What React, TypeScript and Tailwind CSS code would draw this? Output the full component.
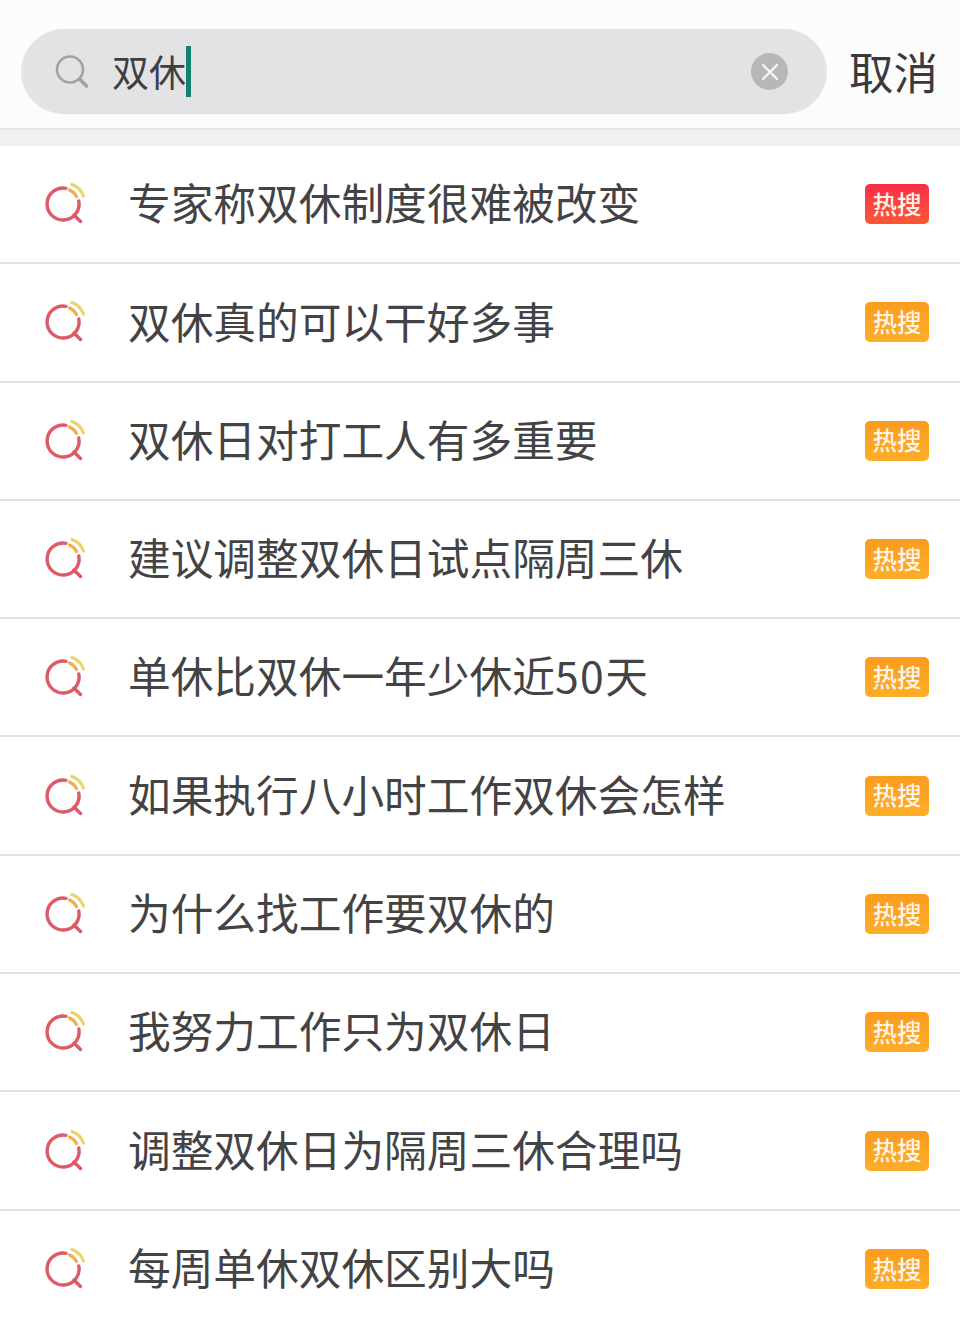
import React from "react";

const rows = [
  "专家称双休制度很难被改变",
  "双休真的可以干好多事",
  "双休日对打工人有多重要",
  "建议调整双休日试点隔周三休",
  <>
    单休比双休一年少休近<span className="tracking-[1.5px]">50</span>天
  </>,
  "如果执行八小时工作双休会怎样",
  "为什么找工作要双休的",
  "我努力工作只为双休日",
  "调整双休日为隔周三休合理吗",
  "每周单休双休区别大吗",
];

const HotIcon = () => (
  <svg width="44" height="44" viewBox="0 0 44 44" fill="none" className="shrink-0">
    <path d="M24 6.3A16 16 0 1 0 36.8 19" stroke="#dd5a66" strokeWidth="3.4" strokeLinecap="round" />
    <path d="M32 33L38.5 39.5" stroke="#dd5a66" strokeWidth="3.4" strokeLinecap="round" />
    <path d="M30 2.5C35.5 4.5 39.5 8.5 41.5 14" stroke="#ecd36c" strokeWidth="3.2" strokeLinecap="round" />
    <path d="M27.5 8C30.5 9.3 33 11.5 34.5 14.5" stroke="#eeb04f" strokeWidth="3.2" strokeLinecap="round" />
  </svg>
);

const Row = ({ text, first }: { text: React.ReactNode; first: boolean }) => (
  <div className="h-[118.3px] flex items-center pl-[42px] pr-[31px] border-b-2 border-[#e1e1e3] bg-white">
    <HotIcon />
    <div className="ml-[42px] mb-[5px] flex-1 text-[42.7px] leading-none text-[#434345] whitespace-nowrap">{text}</div>
    <div
      className={
        first
          ? "w-16 h-10 rounded-[5px] flex items-center justify-center text-[24.5px] font-medium leading-none text-[#fdf3e6] bg-gradient-to-b from-[#f72c47] to-[#fb5733]"
          : "w-16 h-10 rounded-[5px] flex items-center justify-center text-[24.5px] font-medium leading-none text-[#fdf3e6] bg-gradient-to-b from-[#fb9b1f] to-[#fdae28]"
      }
    >
      热搜
    </div>
  </div>
);

export default function App() {
  return (
    <div className="w-[960px] h-[1320px] overflow-hidden bg-white font-['Noto_Sans_CJK_SC','Liberation_Sans',sans-serif]">
      <div className="h-[130px] bg-[#fcfcfc] border-b-2 border-[#e6e6e8] flex items-start pt-[29px] pl-[21px]">
        <div className="w-[806px] h-[85px] rounded-full bg-[#e3e3e5] flex items-center pl-[33px] pr-[39px]">
          <svg width="36" height="36" viewBox="0 0 36 36" fill="none" className="shrink-0">
            <circle cx="16" cy="15.5" r="13" stroke="#a2a2a4" strokeWidth="2.6" />
            <path d="M26 25.5L32.5 32" stroke="#a2a2a4" strokeWidth="3.8" strokeLinecap="round" />
          </svg>
          <span className="ml-[22px] text-[37px] leading-none text-[#3f3f41]">双休</span>
          <span className="w-[5px] h-[51px] bg-[#11806f]" />
          <span className="ml-auto w-[37px] h-[37px] rounded-full bg-[#b7b7b9] flex items-center justify-center">
            <svg width="20" height="20" viewBox="0 0 20 20" fill="none">
              <path d="M3 3L17 17M17 3L3 17" stroke="#f6f6f6" strokeWidth="2.4" strokeLinecap="round" />
            </svg>
          </span>
        </div>
        <span className="ml-[22px] mt-[20px] text-[44.5px] leading-none text-[#3a3a3c]">取消</span>
      </div>
      <div className="h-[16px] bg-[#f0f0f2]" />
      {rows.map((text, i) => (
        <Row key={i} text={text} first={i === 0} />
      ))}
    </div>
  );
}
